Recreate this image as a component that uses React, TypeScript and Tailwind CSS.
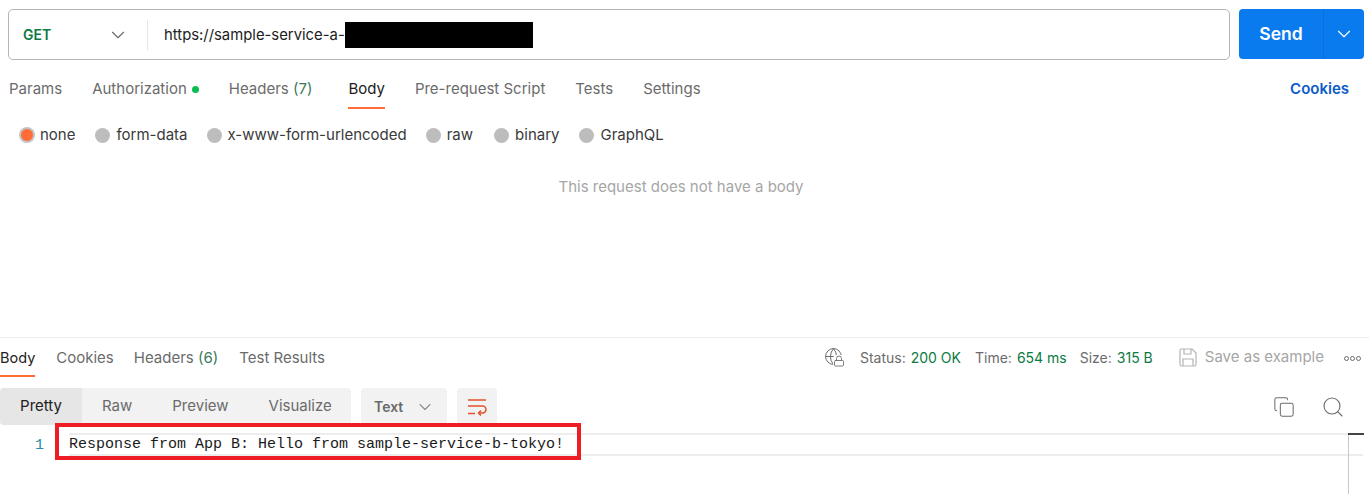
import { ChevronDown, Copy, Search, Globe, Lock } from 'lucide-react';

const font = "font-['Inter','Noto_Sans',sans-serif]";

const App = () => {
  return (
    <div className={`${font} relative w-[1369px] h-[494px] overflow-hidden bg-white text-[15px] text-[#6b6b6b]`}>
      {/* URL bar */}
      <div className="flex gap-[9px] pt-[9px] pl-2 pr-[5px]">
        <div className="flex items-center w-[1222px] h-[51px] rounded-[5px] border border-[#b5b5b5]">
          <span className="w-[98px] pl-[14px] font-semibold text-[#0c7a43] text-[14px]">GET</span>
          <ChevronDown className="w-[22px] h-[22px] text-[#6b6b6b]" strokeWidth={1.25} />
          <div className="w-px h-[30px] bg-[#e6e6e6] ml-[18px]" />
          <span className="pl-4 pt-[2px] text-[14.85px] text-[#212121] whitespace-nowrap">https://sample-service-a-</span>
          <div className="w-[188px] h-[26px] bg-black" />
        </div>
        <div className="flex w-[125px] h-[50px] rounded-[4px] bg-[#0a7bee] text-white">
          <div className="flex items-center justify-center w-[84px] pt-[1px] font-semibold text-[17.5px]">Send</div>
          <div className="flex items-center justify-center flex-1 border-l border-[#0a6fd6]">
            <ChevronDown className="w-[22px] h-[22px]" strokeWidth={1.25} />
          </div>
        </div>
      </div>

      {/* Request tabs */}
      <div className="flex items-center h-[48px] pl-[9px] pr-[20px] mt-[5px]">
        <span className="mr-[30px]">Params</span>
        <span className="flex items-center mr-[30px]">
          Authorization
          <span className="w-[7px] h-[7px] rounded-full bg-[#0cbb52] ml-[5px]" />
        </span>
        <span className="mr-[36px]">
          Headers <span className="text-[#3c7a5c]">(7)</span>
        </span>
        <span className="relative mr-[30px] text-[#212121]">
          Body
          <span className="absolute left-0 right-0 top-[29px] h-[2px] bg-[#ff6c37]" />
        </span>
        <span className="mr-[30px]">Pre-request Script</span>
        <span className="mr-[30px]">Tests</span>
        <span>Settings</span>
        <span className="ml-auto font-semibold text-[#0b5bc9]">Cookies</span>
      </div>

      {/* Body type radios */}
      <div className="flex items-center h-[28px] mt-[8px] pl-[19px] text-[#3a3a3a]">
        <span className="flex items-center justify-center w-4 h-4 rounded-full bg-[#c4c4c4] mr-[5px]">
          <span className="w-3 h-3 rounded-full bg-[#ff6c37]" />
        </span>
        <span className="mr-[20px]">none</span>
        <span className="w-[15px] h-[15px] rounded-full bg-[#bdbdbd] mr-[6px]" />
        <span className="mr-[19px]">form-data</span>
        <span className="w-[15px] h-[15px] rounded-full bg-[#bdbdbd] mr-[6px]" />
        <span className="mr-[19px]">x-www-form-urlencoded</span>
        <span className="w-[15px] h-[15px] rounded-full bg-[#bdbdbd] mr-[6px]" />
        <span className="mr-[21px]">raw</span>
        <span className="w-[15px] h-[15px] rounded-full bg-[#bdbdbd] mr-[6px]" />
        <span className="mr-[20px]">binary</span>
        <span className="w-[15px] h-[15px] rounded-full bg-[#bdbdbd] mr-[6px]" />
        <span>GraphQL</span>
      </div>

      {/* Empty body */}
      <div className="flex justify-center items-start h-[188px] pt-[27px] pr-[7px] text-[#a6a6a6]">
        This request does not have a body
      </div>

      {/* Response */}
      <div className="border-t border-[#ededed]">
        <div className="flex items-center h-[40px] pr-[8px]">
          <span className="relative text-[14.5px] text-[#212121] mr-[21px]">
            Body
            <span className="absolute left-0 right-0 top-[28px] h-[2px] bg-[#ff6c37]" />
          </span>
          <span className="mr-[20px]">Cookies</span>
          <span className="mr-[21px]">
            Headers <span className="text-[#3c7a5c]">(6)</span>
          </span>
          <span>Test Results</span>

          <div className="ml-auto -mt-[2px] flex items-center text-[14px]">
            <span className="relative w-[21px] h-5 mr-[15px] text-[#6b6b6b]">
              <Globe className="w-[19px] h-[19px]" strokeWidth={1.25} />
              <span className="absolute right-0 bottom-0 flex rounded-sm bg-white">
                <Lock className="w-3 h-3" strokeWidth={1.75} />
              </span>
            </span>
            <span className="mr-[5px]">Status:</span>
            <span className="text-[#0c7a43] mr-[14px]">200 OK</span>
            <span className="mr-[5px]">Time:</span>
            <span className="text-[#0c7a43] mr-[13px]">654 ms</span>
            <span className="mr-[5px]">Size:</span>
            <span className="text-[#0c7a43] mr-[26px]">315 B</span>
            <svg className="mr-[8px]" width="18" height="19" viewBox="0 0 18 19" fill="none" stroke="#b5b5b5" strokeWidth="1.2">
              <path d="M2 1h11l4 4v11.500a1.500 1.500 0 0 1-1.500 1.500h-13A1.500 1.500 0 0 1 1 16.500v-14A1.500 1.500 0 0 1 2 1Z" />
              <path d="M5 1v5h7V1" />
              <path d="M4 18v-7h10v7" />
            </svg>
            <span className="text-[#a6a6a6] text-[15px] mr-[20px]">Save as example</span>
            <span className="flex gap-[1px] mt-[2px]">
              <span className="w-[5px] h-[5px] rounded-full border border-[#6b6b6b]" />
              <span className="w-[5px] h-[5px] rounded-full border border-[#6b6b6b]" />
              <span className="w-[5px] h-[5px] rounded-full border border-[#6b6b6b]" />
            </span>
          </div>
        </div>

        {/* Format toolbar */}
        <div className="flex items-center h-[37px] mt-[10px] pr-[24px]">
          <div className="flex h-full w-[351px] rounded-[4px] bg-[#f2f2f2] overflow-hidden">
            <span className="flex items-center justify-center w-[82px] bg-[#e6e6e6] text-[#212121]">Pretty</span>
            <span className="flex items-center ml-[20px]">Raw</span>
            <span className="flex items-center ml-[40px]">Preview</span>
            <span className="flex items-center ml-[40px]">Visualize</span>
          </div>
          <div className="flex items-center h-full w-[86px] ml-[10px] pl-[13px] rounded-[4px] bg-[#f2f2f2] font-semibold text-[14px]">
            Text
            <ChevronDown className="w-5 h-5 ml-[12px]" strokeWidth={1.25} />
          </div>
          <div className="flex items-center justify-center w-[40px] h-full ml-[10px] rounded-[4px] bg-[#f2f2f2]">
            <svg width="20" height="18" viewBox="0 0 20 18" fill="none" stroke="#e0532a" strokeWidth="1.5">
              <path d="M1 2h18" />
              <path d="M1 8h14.500a3.500 3.500 0 0 1 0 7h-3.500" />
              <path d="M14 12.500 11.500 15l2.500 2.500" />
              <path d="M1 15.500h7" />
            </svg>
          </div>
          <Copy className="ml-auto w-[22px] h-[22px]" strokeWidth={1.1} />
          <Search className="ml-[26px] w-6 h-6" strokeWidth={1.1} />
        </div>

        {/* Editor */}
        <div className="flex items-stretch h-[23px] mt-[8px] pr-[6px]">
          <span className="w-[44px] text-right font-['Liberation_Mono',monospace] text-[15px] leading-[25px] text-[#2a8aa8]">1</span>
          <div className="flex-1 ml-[25px] border-y-2 border-[#ededed] font-['Liberation_Mono',monospace] text-[15px] leading-[20px] text-[#1a1a1a] whitespace-pre">
            Response from App B: Hello from sample-service-b-tokyo!
          </div>
        </div>
      </div>

      {/* Annotation and scrollbar */}
      <div className="absolute left-[55px] top-[423px] w-[526px] h-[37px] border-[4px] border-[#ee1c25]" />
      <div className="absolute left-[1348px] top-[433px] w-px h-[61px] bg-[#c8c8c8]" />
      <div className="absolute left-[1348px] top-[433px] w-[16px] h-[2px] bg-[#444444]" />
    </div>
  );
};

export default App;
